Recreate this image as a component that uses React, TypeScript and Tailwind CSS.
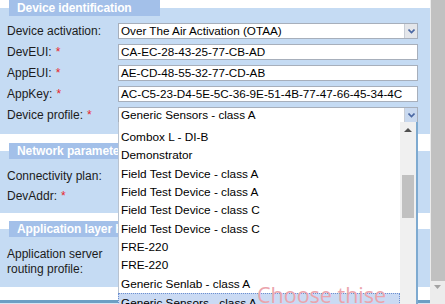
import React from 'react';

const Star: React.FC = () => <span className="text-[#e8262b] ml-[4px]">*</span>;

const Row: React.FC<{ label: string; req?: boolean; children?: React.ReactNode }> = ({ label, req, children }) => (
  <div className="flex items-center h-[16px]">
    <div className="w-[118px] pl-[7px] text-[12px] text-[#1c1c1c] leading-[16px]">
      {label}
      {req && <Star />}
    </div>
    {children}
  </div>
);

const TextBox: React.FC<{ value: string }> = ({ value }) => (
  <div className="w-[300px] h-[16px] border border-[#a7afbb] bg-white pl-[2px] text-[11.7px] leading-[14px] text-black whitespace-nowrap overflow-hidden">
    {value}
  </div>
);

const SelectBox: React.FC<{ value: string; active?: boolean }> = ({ value, active }) => (
  <div className="w-[300px] h-[16px] border border-[#a7afbb] bg-white flex text-[11.7px] leading-[14px] text-black">
    <div className="flex-1 pl-[2px] whitespace-nowrap overflow-hidden">{value}</div>
    <div
      className={
        'w-[13px] h-[14px] border-l border-[#c9ced6] flex items-center justify-center ' +
        (active ? 'bg-[#c9d9ef]' : 'bg-[#e4e6ea]')
      }
    >
      <svg width="7" height="5" viewBox="0 0 7 5">
        <path d="M0.5 0.5 L3.5 3.5 L6.5 0.5" fill="none" stroke="#4b68a3" strokeWidth="1.6" />
      </svg>
    </div>
  </div>
);

const Header: React.FC<{ title: string }> = ({ title }) => (
  <div className="-mt-[8px] ml-[9px] w-[151px] h-[16px] bg-[#a3c0e9] pl-[8px] text-white font-bold text-[12px] tracking-[-0.1px] leading-[16px] whitespace-nowrap overflow-hidden">
    {title}
  </div>
);

const items = [
  'Combox L - DI-B',
  'Demonstrator',
  'Field Test Device - class A',
  'Field Test Device - class A',
  'Field Test Device - class C',
  'Field Test Device - class C',
  'FRE-220',
  'FRE-220',
  'Generic Senlab - class A',
  'Generic Sensors - class A',
];

const App: React.FC = () => {
  return (
    <div className="relative w-[445px] h-[304px] overflow-hidden bg-white flex font-['Liberation_Sans',Arial,sans-serif]">
      <div className="w-[434px] flex flex-col">
        {/* Device identification */}
        <div className="mt-[8px] w-[430px] bg-[#c5dbf3] pb-[11px]">
          <Header title="Device identification" />
          <div className="mt-[7px] flex flex-col gap-[5px]">
            <Row label="Device activation:">
              <SelectBox value="Over The Air Activation (OTAA)" />
            </Row>
            <Row label="DevEUI:" req>
              <TextBox value="CA-EC-28-43-25-77-CB-AD" />
            </Row>
            <Row label="AppEUI:" req>
              <TextBox value="AE-CD-48-55-32-77-CD-AB" />
            </Row>
            <Row label="AppKey:" req>
              <TextBox value="AC-C5-23-D4-5E-5C-36-9E-51-4B-77-47-66-45-34-4C" />
            </Row>
            <Row label="Device profile:" req>
              <SelectBox value="Generic Sensors - class A" active />
            </Row>
          </div>
        </div>

        {/* Network parameters */}
        <div className="mt-[17px] w-[430px] bg-[#c5dbf3] pb-[9px]">
          <Header title="Network parameters" />
          <div className="mt-[9px] flex flex-col gap-[4px]">
            <Row label="Connectivity plan:" />
            <Row label="DevAddr:" req />
          </div>
        </div>

        {/* Application layer handling */}
        <div className="mt-[16px] w-[430px] bg-[#c5dbf3] pb-[10px]">
          <Header title="Application layer handling" />
          <div className="mt-[10px] pl-[7px] text-[12px] leading-[15px] text-[#1c1c1c]">
            <div>Application server</div>
            <div>routing profile:</div>
          </div>
        </div>

        <div className="mt-[13px] h-[5px] bg-[#6c9fc4]" />
        <div className="h-[2px] bg-[#d5e5f3]" />
      </div>

      {/* page scrollbar */}
      <div className="w-[17px] shrink-0 bg-[#ececec] flex flex-col">
        <div className="ml-[1px] w-[14px] h-[281px] bg-[#c1c1c1]" />
        <div className="mt-[4px] ml-[4px]">
          <svg width="7" height="4" viewBox="0 0 7 4">
            <path d="M0 0 L7 0 L3.5 4 Z" fill="#a3a3a3" />
          </svg>
        </div>
      </div>

      {/* open dropdown list */}
      <div className="absolute left-[118px] top-[122px] w-[300px] h-[190px] bg-white border-l border-[#b9c3d0] border-r-2 border-r-[#7eaad0] flex">
        <div className="flex-1 pt-[6px] text-[11.8px] text-black">
          {items.map((it, i) => (
            <div
              key={i}
              className={
                'h-[18.33px] leading-[18px] pl-[2px] whitespace-nowrap ' +
                (i === items.length - 1 ? 'bg-[#cadaf3] border border-dotted border-[#6d8fd0] -ml-px pl-[2px]' : '')
              }
            >
              {it}
            </div>
          ))}
        </div>
        <div className="w-[16px] bg-[#f0f0f0] flex flex-col items-center">
          <div className="mt-[6px]">
            <svg width="8" height="4" viewBox="0 0 8 4">
              <path d="M0 4 L8 4 L4 0 Z" fill="#505050" />
            </svg>
          </div>
          <div className="mt-[43px] w-[12px] h-[43px] bg-[#c1c1c1]" />
        </div>
      </div>

      {/* annotation */}
      <div className="absolute left-[257px] top-[284px] text-[21.5px] leading-[22px] text-[#eba4ac] font-['Open_Sans',sans-serif] whitespace-nowrap">
        Choose thise
      </div>
    </div>
  );
};

export default App;
